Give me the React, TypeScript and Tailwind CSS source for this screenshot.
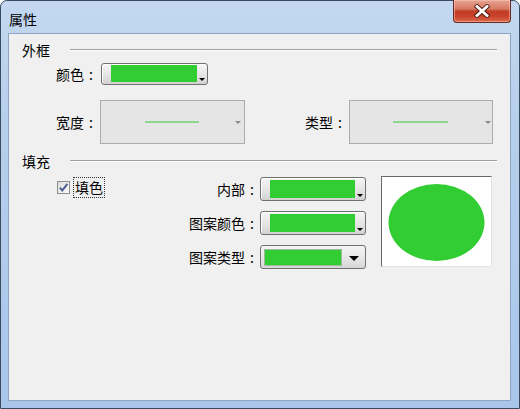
import React from 'react';

// limegreen swatch used everywhere in the dialog
const GREEN = 'bg-[#32cd32]';

function Label({ text, className = '' }: { text: string; className?: string }) {
  return (
    <span className={`flex shrink-0 whitespace-nowrap ${className}`}>
      {text}
      <span className="w-[14px] text-center">:</span>
    </span>
  );
}

function GroupHeader({ title }: { title: string }) {
  return (
    <div className="flex h-[16px] items-center pl-[13px] pr-[13px]">
      <span className="shrink-0">{title}</span>
      <div className="ml-[20px] h-[2px] flex-1 border-t border-t-[#a0a0a0] border-b border-b-white" />
    </div>
  );
}

function SmallArrow({ color = 'border-t-black' }: { color?: string }) {
  return (
    <span className={`block h-0 w-0 border-x-[3px] border-t-[3px] border-x-transparent ${color}`} />
  );
}

// colour picker button: rounded button face with a green swatch and a tiny arrow bottom-right
function ColorButton({ w, h, swatch, py }: { w: string; h: string; swatch: string; py: string }) {
  return (
    <div
      className={`flex ${w} ${h} shrink-0 rounded-[3px] border border-[#707070] bg-gradient-to-b from-[#f5f5f5] via-[#e6e6e6] to-[#d2d2d2] shadow-[inset_1px_1px_0_#ffffff] pl-[9px] pr-px ${py}`}
    >
      <div className={`${swatch} h-full ${GREEN}`} />
      <div className="flex flex-1 items-end justify-center pb-[1px]">
        <SmallArrow />
      </div>
    </div>
  );
}

function LineCombo({ w, pl, lineW, mr }: { w: string; pl: string; lineW: string; mr: string }) {
  return (
    <div className={`flex ${w} h-[44px] shrink-0 items-center border border-[#acacac] bg-[#e5e5e5] ${pl}`}>
      <div className={`${lineW} h-[2px] bg-[#8fd68f]`} />
      <span className={`ml-auto ${mr}`}>
        <SmallArrow color="border-t-[#8a8a8a]" />
      </span>
    </div>
  );
}

function Checkbox() {
  return (
    <div className="flex h-[13px] w-[13px] shrink-0 items-center justify-center border border-[#8e8f8f] bg-gradient-to-br from-[#dcdcdc] to-[#fbfbfb]">
      <svg width="11" height="11" viewBox="0 0 11 11">
        <path d="M1.8 5.6 L4.3 8.4 L9.4 1.9" fill="none" stroke="#4b5f8f" strokeWidth="1.9" />
      </svg>
    </div>
  );
}

function CloseButton() {
  return (
    <div className="flex h-[23px] w-[58px] items-center justify-center rounded-b-[4px] border border-t-0 border-[#6a2c22] bg-[linear-gradient(to_bottom,#e7a393_0%,#d87a64_40%,#c23b24_52%,#c9442b_75%,#dd6a4c_100%)] shadow-[inset_0_0_0_1px_rgba(255,210,200,0.45)]">
      <svg width="16" height="14" viewBox="0 0 16 14">
        <path d="M3 2.5 L13 11.5 M13 2.5 L3 11.5" stroke="#4a1b12" strokeWidth="4.6" strokeLinecap="square" />
        <path d="M3 2.5 L13 11.5 M13 2.5 L3 11.5" stroke="#ffffff" strokeWidth="2.8" strokeLinecap="square" />
      </svg>
    </div>
  );
}

export default function App() {
  return (
    <div className="flex h-[409px] w-[520px] flex-col rounded-t-[7px] border border-[#3a4b60] bg-[linear-gradient(to_bottom,#c3d8f0,#b6cfec_30%,#a9c6ea)] pb-[7px] pl-[7px] pr-[8px] font-['Noto_Sans_CJK_SC',sans-serif] text-[14px] leading-[16px] text-black">
      {/* Title bar */}
      <div className="flex h-[32px] shrink-0 items-start">
        <span className="pl-px pt-[10px]">属性</span>
        <div className="ml-auto -mt-px">
          <CloseButton />
        </div>
      </div>

      {/* Client area */}
      <div className="flex flex-1 flex-col border border-[#8ea5c2] bg-[#f0f0f0]">
        <div className="mt-[8px]">
          <GroupHeader title="外框" />
        </div>

        <div className="mt-[5px] flex h-[22px] items-center pl-[47px]">
          <Label text="颜色" />
          <div className="ml-[3px]">
            <ColorButton w="w-[107px]" h="h-[22px]" swatch="w-[86px]" py="pt-px pb-[2px]" />
          </div>
        </div>

        <div className="mt-[15px] flex items-center pl-[47px]">
          <Label text="宽度" />
          <div className="ml-[2px]">
            <LineCombo w="w-[145px]" pl="pl-[44px]" lineW="w-[54px]" mr="mr-[3px]" />
          </div>
          <Label text="类型" className="ml-[60px]" />
          <div className="ml-[2px]">
            <LineCombo w="w-[144px]" pl="pl-[43px]" lineW="w-[55px]" mr="mr-[1px]" />
          </div>
        </div>

        <div className="mt-[9px]">
          <GroupHeader title="填充" />
        </div>

        {/* Fill section */}
        <div className="mt-[7px] flex pl-[48px]">
          <div className="flex w-[125px] shrink-0 items-start pt-px">
            <div className="flex h-[21px] items-center">
              <Checkbox />
              <span className="ml-[3px] border border-dotted border-[#333] px-px leading-[19px]">填色</span>
            </div>
          </div>

          <div className="flex w-[184px] shrink-0 flex-col gap-[10px] pt-px">
            <div className="flex h-[24px] items-center justify-end">
              <Label text="内部" />
              <div className="ml-px">
                <ColorButton w="w-[106px]" h="h-[24px]" swatch="w-[85px]" py="py-[2px]" />
              </div>
            </div>
            <div className="flex h-[24px] items-center justify-end">
              <Label text="图案颜色" />
              <div className="ml-px">
                <ColorButton w="w-[106px]" h="h-[24px]" swatch="w-[85px]" py="py-[2px]" />
              </div>
            </div>
            <div className="flex h-[24px] items-center justify-end">
              <Label text="图案类型" />
              <div className="ml-px flex h-[24px] w-[106px] items-center rounded-[3px] border border-[#707070] bg-gradient-to-b from-[#f4f4f4] via-[#e8e8e8] to-[#d6d6d6] pl-[3px]">
                <div className={`h-[17px] w-[78px] border border-[#9fb89f] ${GREEN}`} />
                <div className="flex flex-1 items-center justify-center pt-[2px]">
                  <span className="block h-0 w-0 border-x-[5px] border-t-[5px] border-x-transparent border-t-black" />
                </div>
              </div>
            </div>
          </div>

          <div className="ml-[15px] h-[91px] w-[111px] shrink-0 border border-b-[#e3e3e3] border-l-[#696969] border-r-[#e3e3e3] border-t-[#696969] bg-white">
            <svg width="109" height="89" viewBox="0 0 109 89">
              <ellipse cx="54.5" cy="45.5" rx="48" ry="38.5" fill="#32cd32" />
            </svg>
          </div>
        </div>
      </div>
    </div>
  );
}
